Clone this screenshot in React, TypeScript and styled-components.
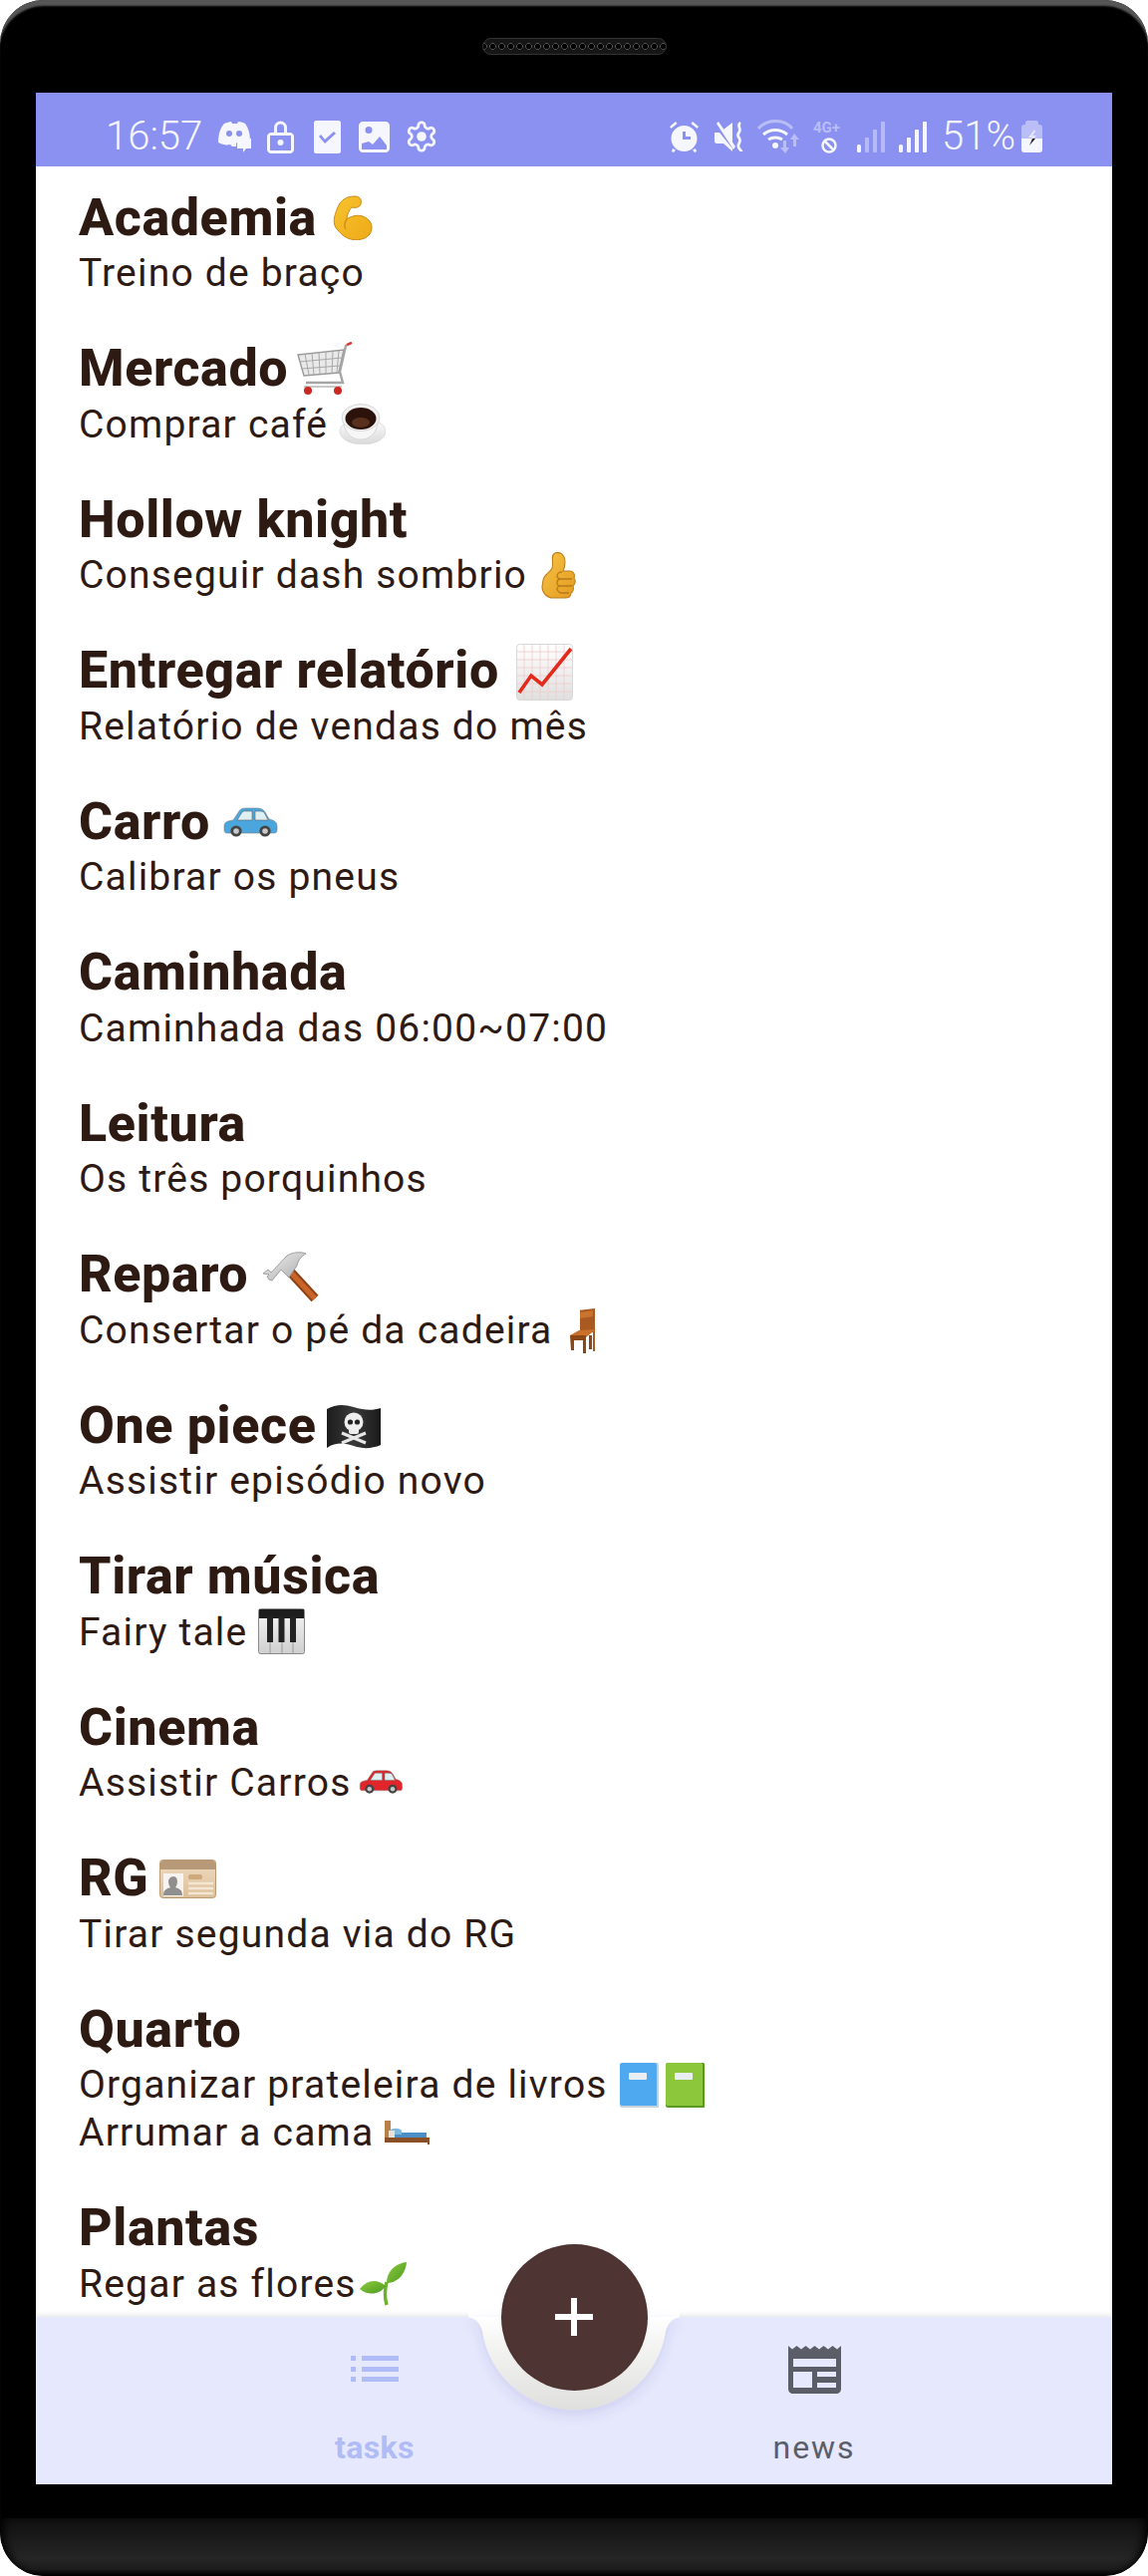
import React from 'react';
import styled, { createGlobalStyle } from 'styled-components';

const Global = createGlobalStyle`
  html, body { margin: 0; padding: 0; background: #fff; }
  * { box-sizing: border-box; }
`;

const Phone = styled.div`
  position: relative;
  width: 1152px;
  height: 2585px;
  display: flex;
  flex-direction: column;
  background: #000;
  border-radius: 44px;
  overflow: hidden;
  box-shadow: inset 0 7px 2px -1px #565656;
`;
const Speaker = styled.div`
  align-self: center;
  width: 185px;
  height: 17px;
  margin-top: 38px;
  border-radius: 9px;
  border: 1px solid #333;
  background-color: #161616;
  background-image: radial-gradient(circle at center, #000 2.4px, #5a5a5a 3px, transparent 3.6px);
  background-size: 9px 15px;
  background-position: 5px 0;
  background-repeat: repeat-x;
`;
const Screen = styled.div`
  margin: 38px 36px 0;
  height: 2400px;
  display: flex;
  flex-direction: column;
  background: #fff;
`;
const Chin = styled.div`
  margin-top: 34px;
  height: 58px;
  background: linear-gradient(#0f0f0f, #262626 70%, #1c1c1c 88%, #000);
  border-radius: 0 0 44px 44px;
  box-shadow: inset 10px 0 10px -6px #000, inset -10px 0 10px -6px #000;
`;
const StatusBar = styled.div`
  height: 74px;
  flex: none;
  background: #8a91f1;
  display: flex;
  align-items: center;
  justify-content: space-between;
  padding: 14px 70px 0 70px;
  color: #f5f6fe;
`;
const StatusGroup = styled.div`
  display: flex;
  align-items: center;
`;
const StatusText = styled.span<{ $ml?: number }>`
  font-family: Roboto, 'Liberation Sans', sans-serif;
  font-weight: 300;
  font-size: 40px;
  line-height: 44px;
  margin-left: ${p => p.$ml ?? 0}px;
`;
const StatusIcon = styled.svg<{ $ml: number; $dim?: boolean }>`
  display: block;
  flex: none;
  margin-left: ${p => p.$ml}px;
  fill: #f5f6fe;
  stroke: none;
  opacity: ${p => (p.$dim ? 0.45 : 1)};
`;
const List = styled.div`
  flex: 1;
  min-height: 0;
  overflow: hidden;
  padding: 20.5px 0 0 43px;
  color: #2d1a13;
`;
const Item = styled.div`
  margin-bottom: 41px;
`;
const Title = styled.div`
  font-family: Roboto, 'Liberation Sans', sans-serif;
  font-weight: 800;
  font-size: 52px;
  line-height: 62.5px;
  letter-spacing: 0.6px;
  white-space: nowrap;
`;
const Sub = styled.div`
  font-family: Roboto, 'Liberation Sans', sans-serif;
  font-weight: 400;
  font-size: 39px;
  line-height: 48px;
  letter-spacing: 1.2px;
  white-space: nowrap;
`;
const Emoji = styled.svg<{ $drop: number; $gap?: number }>`
  display: inline-block;
  vertical-align: ${p => -p.$drop}px;
  margin-top: -40px;
  margin-left: ${p => p.$gap ?? 0}px;
`;
const TabBar = styled.div`
  position: relative;
  flex: none;
  height: 168px;
  display: flex;
  padding-left: 240px;
  gap: 241px;
  background: #e6e8fd;
  box-shadow: 0 -1px 6px rgba(0, 0, 0, 0.13);
`;
const Tab = styled.div<{ $active?: boolean }>`
  width: 200px;
  height: 100%;
  display: flex;
  flex-direction: column;
  align-items: center;
  font-family: Roboto, 'Liberation Sans', sans-serif;
  color: ${p => (p.$active ? '#b0bcf5' : '#5b5e66')};
  fill: ${p => (p.$active ? '#b0bcf5' : '#5b5e66')};
`;
const TabIconSlot = styled.div<{ $top: number }>`
  height: 84px;
  margin-top: ${p => p.$top}px;
  display: flex;
  align-items: flex-start;
  justify-content: center;
`;
const TabLabel = styled.span<{ $active?: boolean; $shift: number }>`
  font-size: 32px;
  line-height: 36px;
  margin-top: ${p => p.$shift}px;
  font-weight: ${p => (p.$active ? 700 : 400)};
  letter-spacing: ${p => (p.$active ? 0.4 : 1.9)}px;
`;
const Notch = styled.svg`
  position: absolute;
  left: 404px;
  top: -8px;
  overflow: hidden;
`;
const Fab = styled.button`
  position: absolute;
  left: 466.5px;
  top: -73.5px;
  width: 147px;
  height: 147px;
  border: 0;
  padding: 0;
  border-radius: 50%;
  background: #4e3534;
  display: flex;
  align-items: center;
  justify-content: center;
`;

/* ---------- Emoji drawings ---------- */
type EP = { drop: number; gap?: number };
const Muscle = ({ drop, gap }: EP) => (
  <Emoji $drop={drop} $gap={gap} width="42" height="45" viewBox="0 0 42 45">
    <defs><linearGradient id="mu" x1="0" y1="0" x2="1" y2="1"><stop offset="0" stopColor="#f7c32e" /><stop offset="1" stopColor="#eeaa17" /></linearGradient></defs>
    <path d="M7 35C1 29 3 21 7 12 10 5 15 1 24 1c6 0 7 4 6 8-1 3-5 4-9 3-3 3-5 8-5 12 5-4 13-5 18-2 7 3 9 11 5 17-5 7-18 7-24 3-4-2-6-5-8-7Z" fill="url(#mu)" stroke="#c98a1c" strokeWidth="1" />
    <path d="M16 24c-2 3-3 7-1 10" fill="none" stroke="#d08f1a" strokeWidth="1.5" />
  </Emoji>
);
const Cart = ({ drop, gap }: EP) => (
  <Emoji $drop={drop} $gap={gap} width="58" height="54" viewBox="0 0 58 54">
    <path d="M2 13 48 8 43 31 8 34Z" fill="#e9e9e9" stroke="#9a9a9a" strokeWidth="1.4" />
    <path d="M9 12 13 33M16 11 18 33M23 10 24 32M30 10 30 32M37 9 36 32M43 9 41 31M4 20 46 16M6 27 44 24" stroke="#a8a8a8" strokeWidth="1" fill="none" />
    <path d="M55 1 50 4 44 30 47 41H10" stroke="#a5a5a5" strokeWidth="2.4" fill="none" />
    <path d="M56 1 51 3" stroke="#e0342c" strokeWidth="2.4" />
    <path d="M8 45H46" stroke="#c9c9c9" strokeWidth="2" />
    <circle cx="12" cy="49" r="4" fill="#c92a24" /><circle cx="42" cy="49" r="4" fill="#c92a24" />
  </Emoji>
);
const Coffee = ({ drop, gap }: EP) => (
  <Emoji $drop={drop} $gap={gap} width="47" height="41" viewBox="0 0 47 41">
    <defs><linearGradient id="co" x1="0" y1="0" x2="0" y2="1"><stop offset="0" stopColor="#fff" /><stop offset="1" stopColor="#d9d9d9" /></linearGradient></defs>
    <ellipse cx="24" cy="28" rx="23" ry="13" fill="url(#co)" stroke="#dcdcdc" />
    <path d="M4 14C5 30 13 36 22 36s17-6 18-22Z" fill="#f6f6f6" stroke="#d8d8d8" />
    <ellipse cx="22" cy="14" rx="19" ry="13.5" fill="#f2f2f2" stroke="#d8d8d8" />
    <ellipse cx="22" cy="15" rx="15.5" ry="11" fill="#2b130b" />
    <ellipse cx="22" cy="19" rx="9" ry="5" fill="#59301d" />
  </Emoji>
);
const Thumb = ({ drop, gap }: EP) => (
  <Emoji $drop={drop} $gap={gap} width="35" height="47" viewBox="0 0 35 47">
    <defs><linearGradient id="th" x1="0" y1="0" x2="1" y2="1"><stop offset="0" stopColor="#f6c445" /><stop offset="1" stopColor="#e49a20" /></linearGradient></defs>
    <path d="M2 28C3 22 9 21 11 16 13 10 9 3 14 1c5-2 10 2 10 9 0 4-1 7-2 9h7c4 0 5 4 4 7 2 3 1 6-1 8 1 3 0 6-2 7 0 4-3 5-6 5H12C6 46 1 41 1 35Z" fill="url(#th)" stroke="#bf7f1c" strokeWidth="1.1" />
    <path d="M21 20c-3 0-5 2-5 4s2 3 5 3h10M20 27c-3 0-4 2-4 4s2 3 4 3h11M20 34c-3 0-4 2-4 3s2 4 4 4h8" fill="none" stroke="#b87918" strokeWidth="1.3" />
  </Emoji>
);
const Chart = ({ drop, gap }: EP) => (
  <Emoji $drop={drop} $gap={gap} width="57" height="57" viewBox="0 0 57 57">
    <defs><linearGradient id="ch" x1="0" y1="0" x2="0" y2="1"><stop offset="0" stopColor="#fff" /><stop offset="1" stopColor="#dfdfdf" /></linearGradient></defs>
    <rect x=".5" y=".5" width="56" height="56" rx="3" fill="url(#ch)" stroke="#d8d8d8" />
    <path d="M8 1V56M16 1V56M24 1V56M32 1V56M40 1V56M48 1V56M1 8H56M1 16H56M1 24H56M1 32H56M1 40H56M1 48H56" stroke="#f3c9c9" strokeWidth=".8" />
    <path d="M3 49 15 32 26 41 55 5" fill="none" stroke="#e22b1c" strokeWidth="3.6" />
  </Emoji>
);
const Car = ({ drop, gap, color, w, h }: EP & { color: string; w: number; h: number }) => (
  <Emoji $drop={drop} $gap={gap} width={w} height={h} viewBox="0 0 56 30">
    <path d="M2 19c0-4 3-5 9-6l6-9c1-2 3-3 6-3h12c4 0 6 1 8 4l4 7c5 1 8 3 8 7v4c0 2-1 3-3 3H5c-2 0-3-1-3-3Z" fill={color} stroke="#7d7d7d" strokeWidth=".6" />
    <path d="M15 13 20 5c1-1 2-1 3-1h7v9ZM33 4h5c3 0 4 1 5 3l3 6H33Z" fill="#dff0f5" stroke="#666" strokeWidth=".6" />
    <circle cx="14" cy="24" r="5.6" fill="#444" /><circle cx="14" cy="24" r="2.8" fill="#c9c9c9" />
    <circle cx="43" cy="24" r="5.6" fill="#444" /><circle cx="43" cy="24" r="2.8" fill="#c9c9c9" />
  </Emoji>
);
const Hammer = ({ drop, gap }: EP) => (
  <Emoji $drop={drop} $gap={gap} width="57" height="50" viewBox="0 0 57 50">
    <defs><linearGradient id="ha" x1="0" y1="0" x2="1" y2="1"><stop offset="0" stopColor="#f2f2f2" /><stop offset="1" stopColor="#a9a9a9" /></linearGradient></defs>
    <path d="M29 21 53 47" stroke="#8f4315" strokeWidth="9.5" />
    <path d="M29 21 53 47" stroke="#c9642a" strokeWidth="5.5" />
    <path d="M1 22 6 18 9 21 25 4c7-4 14-4 19-2-5 3-8 7-9 12l-8 12-8-8-9 11-3-1-2-3 2-2Z" fill="url(#ha)" stroke="#8e8e8e" strokeWidth=".8" />
  </Emoji>
);
const Chair = ({ drop, gap }: EP) => (
  <Emoji $drop={drop} $gap={gap} width="28" height="46" viewBox="0 0 28 46">
    <path d="M9 3 26 1V44H24V25L11 26V3Z" fill="#a95a20" />
    <path d="M11 5 24 3V9L11 11Z" fill="#c9742e" />
    <path d="M1 28 10 23 27 22 17 30Z" fill="#c9702b" />
    <path d="M1 28H17V46H14V33H5V43H2ZM20 28H23V42H20Z" fill="#8c4717" />
  </Emoji>
);
const Flag = ({ drop, gap }: EP) => (
  <Emoji $drop={drop} $gap={gap} width="56" height="46" viewBox="0 0 56 46">
    <defs><linearGradient id="fl" x1="0" y1="0" x2="1" y2="0"><stop offset="0" stopColor="#1c1c1c" /><stop offset=".5" stopColor="#3a3a3a" /><stop offset="1" stopColor="#1a1a1a" /></linearGradient></defs>
    <path d="M1 5C10 0 18 0 28 3s18 4 27 1V41c-9 4-18 4-27 1S10 38 1 44Z" fill="url(#fl)" />
    <path d="M16 29 40 39M40 29 16 39" stroke="#e8e8e8" strokeWidth="3" />
    <circle cx="28" cy="18" r="9.5" fill="#eee" /><rect x="23" y="24" width="10" height="6" rx="2" fill="#eee" />
    <circle cx="24.5" cy="18" r="2.6" fill="#222" /><circle cx="31.5" cy="18" r="2.6" fill="#222" />
  </Emoji>
);
const Piano = ({ drop, gap }: EP) => (
  <Emoji $drop={drop} $gap={gap} width="47" height="46" viewBox="0 0 47 46">
    <defs><linearGradient id="pi" x1="0" y1="0" x2="0" y2="1"><stop offset="0" stopColor="#f5f5f5" /><stop offset="1" stopColor="#cfcfcf" /></linearGradient></defs>
    <rect x=".5" y=".5" width="46" height="45" rx="2" fill="url(#pi)" stroke="#8a8a8a" />
    <rect x="1" y="1" width="45" height="9" fill="#1d1d1d" />
    <path d="M12 10V45M24 10V45M35 10V45" stroke="#9a9a9a" />
    <path d="M9 8h6v26H9ZM20.500 8h6v26h-6ZM32 8h6v26h-6Z" fill="#222" />
  </Emoji>
);
const IdCard = ({ drop, gap }: EP) => (
  <Emoji $drop={drop} $gap={gap} width="57" height="39" viewBox="0 0 57 39">
    <defs><linearGradient id="id" x1="0" y1="0" x2="0" y2="1"><stop offset="0" stopColor="#efdcc2" /><stop offset="1" stopColor="#dcbf9a" /></linearGradient></defs>
    <rect x=".5" y=".5" width="56" height="38" rx="3" fill="url(#id)" stroke="#b89a74" />
    <path d="M1 4c0-2 1-3 3-3h49c2 0 3 1 3 3v6H1Z" fill="#b89a78" />
    <rect x="4" y="14" width="20" height="23" fill="#f7f3ee" />
    <path d="M14 17c3 0 4 3 4 5s-1 5-2 6c3 1 7 2 7 8H4c0-6 4-7 7-8-1-1-2-4-2-6s2-5 5-5Z" fill="#8f8f8f" />
    <rect x="29" y="15" width="14" height="5" rx="2" fill="#cfa87b" />
    <path d="M29 24H54M29 29H54M29 34H54" stroke="#f3e6d2" strokeWidth="2.4" />
  </Emoji>
);
const Book = ({ drop, gap, color, edge }: EP & { color: string; edge: string }) => (
  <Emoji $drop={drop} $gap={gap} width="41" height="45" viewBox="0 0 41 45">
    <path d="M1 2c0-1 1-2 2-2h36l1 1v44H3c-1 0-2-1-2-2Z" fill={edge} />
    <path d="M1 2c0-1 1-2 2-2h33c1 0 2 1 2 2v41H3c-1 0-2-1-2-2Z" fill={color} />
    <rect x="10" y="10" width="18" height="7" rx="1" fill="#e9eef2" />
  </Emoji>
);
const Bed = ({ drop, gap }: EP) => (
  <Emoji $drop={drop} $gap={gap} width="45" height="24" viewBox="0 0 45 24">
    <rect x="0" y="0" width="6" height="22" fill="#b98149" />
    <rect x="4" y="12" width="38" height="6" fill="#4c8fc7" />
    <path d="M5 10c3-3 9-3 12 0v4H5Z" fill="#7fb9dd" />
    <rect x="4" y="10" width="6" height="7" fill="#e9e2d2" />
    <rect x="0" y="17" width="45" height="5" fill="#8b4f26" />
    <rect x="43" y="17" width="2" height="7" fill="#8b4f26" />
  </Emoji>
);
const Seedling = ({ drop, gap }: EP) => (
  <Emoji $drop={drop} $gap={gap} width="47" height="44" viewBox="0 0 47 44">
    <defs><linearGradient id="se" x1="0" y1="0" x2="1" y2="1"><stop offset="0" stopColor="#8ecb3f" /><stop offset="1" stopColor="#4b9a1f" /></linearGradient></defs>
    <path d="M27 20C25 28 25 36 27 43" fill="none" stroke="#6db02c" strokeWidth="3.4" />
    <path d="M27 21C27 8 37 1 47 0 46 12 38 21 27 21Z" fill="url(#se)" />
    <path d="M26 24C17 16 7 18 0 27 8 34 20 33 26 24Z" fill="url(#se)" />
  </Emoji>
);

/* ---------- Data ---------- */
type Line = { text: string; emoji?: React.ReactNode };
type Task = { title: string; emoji?: React.ReactNode; lines: Line[] };
const tasks: Task[] = [
  { title: 'Academia', emoji: <Muscle drop={5} gap={1} />, lines: [{ text: 'Treino de braço' }] },
  { title: 'Mercado', emoji: <Cart drop={10} gap={-6} />, lines: [{ text: 'Comprar café', emoji: <Coffee drop={7} /> }] },
  { title: 'Hollow knight', lines: [{ text: 'Conseguir dash sombrio', emoji: <Thumb drop={11} gap={3} /> }] },
  { title: 'Entregar relatório', emoji: <Chart drop={13} gap={4} />, lines: [{ text: 'Relatório de vendas do mês' }] },
  { title: 'Carro', emoji: <Car drop={1} gap={-2} color="#4aa6dc" w={56} h={36} />, lines: [{ text: 'Calibrar os pneus' }] },
  { title: 'Caminhada', lines: [{ text: 'Caminhada das 06:00~07:00' }] },
  { title: 'Leitura', lines: [{ text: 'Os três porquinhos' }] },
  { title: 'Reparo', emoji: <Hammer drop={10} />, lines: [{ text: 'Consertar o pé da cadeira', emoji: <Chair drop={10} gap={6} /> }] },
  { title: 'One piece', emoji: <Flag drop={7} gap={-4} />, lines: [{ text: 'Assistir episódio novo' }] },
  { title: 'Tirar música', lines: [{ text: 'Fairy tale', emoji: <Piano drop={9} /> }] },
  { title: 'Cinema', lines: [{ text: 'Assistir Carros', emoji: <Car drop={-2} gap={-4} color="#e0262a" w={46} h={24} /> }] },
  { title: 'RG', emoji: <IdCard drop={3} gap={-3} />, lines: [{ text: 'Tirar segunda via do RG' }] },
  {
    title: 'Quarto',
    lines: [
      {
        text: 'Organizar prateleira de livros',
        emoji: (
          <>
            <Book drop={10} color="#4fa9f1" edge="#c5d3de" />
            <Book drop={10} gap={5} color="#8cc63a" edge="#5a9a22" />
          </>
        ),
      },
      { text: 'Arrumar a cama', emoji: <Bed drop={-1} /> },
    ],
  },
  { title: 'Plantas', lines: [{ text: 'Regar as flores', emoji: <Seedling drop={9} gap={-8} /> }] },
];

export default function App() {
  return (
    <>
      <Global />
      <Phone>
        <Speaker />
        <Screen>
          <StatusBar>
            <StatusGroup>
              <StatusText>16:57</StatusText>
              {/* Discord with chat bubble */}
              <StatusIcon $ml={15} width="34" height="32" viewBox="0 0 34 32">
                <path d="M7 3c3-1 5-2 7-2l1 2h5l1-2c3 0 5 1 7 2 3 4 5 10 5 17h-9c-2 0-4 1-5 3v3h-4l-2-2c-4 1-8 0-12-2 0-8 2-15 6-19Z" />
                <circle cx="12" cy="13" r="3" fill="#8a91f1" /><circle cx="22" cy="13" r="3" fill="#8a91f1" />
                <path d="M20 18h14v10h-5l-3 4v-4h-6Z" />
              </StatusIcon>
              <StatusIcon $ml={16} width="27" height="34" viewBox="0 0 27 34">
                <path fillRule="evenodd" d="M7 13V8a6.500 6.500 0 0 1 13 0v5h3c2 0 4 2 4 4v13c0 2-2 4-4 4H4c-2 0-4-2-4-4V17c0-2 2-4 4-4Zm3 0h7V8a3.500 3.500 0 0 0-7 0ZM4 16c-1 0-1 0-1 1v13c0 1 0 1 1 1h19c1 0 1 0 1-1V17c0-1 0-1-1-1Z" />
                <circle cx="13.500" cy="23" r="3" />
              </StatusIcon>
              <StatusIcon $ml={20} width="27" height="33" viewBox="0 0 27 33">
                <path fillRule="evenodd" d="M2 0h23c1 0 2 1 2 2v29c0 1-1 2-2 2H2c-1 0-2-1-2-2V2C0 1 1 0 2 0Zm5 14-2 2 6 7 11-10-2-2-9 8Z" />
              </StatusIcon>
              <StatusIcon $ml={18} width="31" height="31" viewBox="0 0 31 31">
                <path fillRule="evenodd" d="M4 0h23c2 0 4 2 4 4v23c0 2-2 4-4 4H4c-2 0-4-2-4-4V4c0-2 2-4 4-4Zm6 5a3.500 3.500 0 1 0 0 7 3.500 3.500 0 0 0 0-7ZM3 22v5c0 1 0 1 1 1h23c1 0 1 0 1-1v-3l-7-9-7 8-4-3Z" />
              </StatusIcon>
              <StatusIcon $ml={15} width="34" height="34" viewBox="0 0 24 24">
                <path fill="none" stroke="#f5f6fe" strokeWidth="2" d="M12.220 2h-.44a2 2 0 0 0-2 2v.18a2 2 0 0 1-1 1.730l-.43.25a2 2 0 0 1-2 0l-.15-.08a2 2 0 0 0-2.730.73l-.22.380a2 2 0 0 0 .73 2.730l.15.1a2 2 0 0 1 1 1.720v.51a2 2 0 0 1-1 1.740l-.15.090a2 2 0 0 0-.73 2.730l.22.380a2 2 0 0 0 2.730.730l.15-.08a2 2 0 0 1 2 0l.43.250a2 2 0 0 1 1 1.730V20a2 2 0 0 0 2 2h.44a2 2 0 0 0 2-2v-.18a2 2 0 0 1 1-1.730l.43-.25a2 2 0 0 1 2 0l.15.080a2 2 0 0 0 2.730-.730l.22-.39a2 2 0 0 0-.73-2.730l-.15-.08a2 2 0 0 1-1-1.740v-.5a2 2 0 0 1 1-1.740l.15-.09a2 2 0 0 0 .73-2.730l-.22-.380a2 2 0 0 0-2.730-.730l-.15.080a2 2 0 0 1-2 0l-.43-.25a2 2 0 0 1-1-1.730V4a2 2 0 0 0-2-2z" />
                <circle cx="12" cy="12" r="3.400" />
              </StatusIcon>
            </StatusGroup>
            <StatusGroup>
              {/* alarm */}
              <StatusIcon $ml={0} width="29" height="31" viewBox="0 0 29 31">
                <path fillRule="evenodd" d="M14.500 4a13 13 0 1 1 0 26 13 13 0 0 1 0-26Zm-1.500 6v8h8v-3h-5v-5Z" />
                <path d="M0 5 6 0l1.500 2-6 5ZM29 5 23 0l-1.500 2 6 5ZM3 27l3 1.500-2 2.500-2-1ZM26 27l-3 1.500 2 2.500 2-1Z" />
              </StatusIcon>
              {/* mute/vibrate */}
              <StatusIcon $ml={16} width="29" height="31" viewBox="0 0 29 31">
                <path d="M2 2 4 0 21 25l-2 3ZM0 11h5l13 16v3l-9-8H2c-1 0-2-1-2-2ZM9 8l9-7v21Z" />
                <path d="M26 1c-4 3 1 6-1 9-2 3-2 4 0 7 2 4-2 5-1 8 0 2 3 4 3 5" fill="none" stroke="#f5f6fe" strokeWidth="2.800" />
              </StatusIcon>
              {/* wifi */}
              <StatusIcon $ml={14} width="42" height="34" viewBox="0 0 42 34">
                <path d="M1 9C10-1 27-1 35 9" fill="none" stroke="#fff" strokeOpacity=".4" strokeWidth="3" />
                <path d="M6 15c7-6 17-6 24 0M11 20c5-3 9-3 14 0" fill="none" stroke="#f5f6fe" strokeWidth="3" />
                <circle cx="18" cy="26" r="3" />
                <path d="M28 34l-5-6h3v-7h3v7h3ZM37 14l5 6h-3v7h-3v-7h-3Z" opacity=".45" />
              </StatusIcon>
              {/* 4G+ */}
              <StatusIcon $ml={14} width="32" height="34" viewBox="0 0 32 34">
                <circle cx="16" cy="26" r="6.500" fill="none" stroke="#f5f6fe" strokeWidth="2.500" />
                <path d="M11 21 21 31" stroke="#f5f6fe" strokeWidth="2.500" />
                <text x="0" y="13" fontFamily="Roboto, sans-serif" fontWeight="700" fontSize="15" fill="#f5f6fe" fillOpacity=".45">4G+</text>
              </StatusIcon>
              {/* signal dim */}
              <StatusIcon $ml={12} width="28" height="31" viewBox="0 0 28 31">
                <rect x="0" y="23" width="4" height="8" rx="1.500" />
                <g opacity=".4">
                  <rect x="8" y="16" width="4" height="15" rx="1" /><rect x="16" y="8" width="4" height="23" rx="1" /><rect x="24" y="0" width="4" height="31" rx="1" />
                </g>
              </StatusIcon>
              {/* signal */}
              <StatusIcon $ml={14} width="28" height="31" viewBox="0 0 28 31">
                <rect x="0" y="23" width="4" height="8" rx="1.500" /><rect x="8" y="16" width="4" height="15" rx="1" /><rect x="16" y="8" width="4" height="23" rx="1" /><rect x="24" y="0" width="4" height="31" rx="1" />
              </StatusIcon>
              <StatusText $ml={15}>51%</StatusText>
              {/* battery */}
              <StatusIcon $ml={6} width="21" height="32" viewBox="0 0 21 32">
                <path d="M6 0h9c1 0 2 1 2 2v2h1c2 0 3 1 3 3v11H0V7c0-2 1-3 3-3h1V2c0-1 1-2 2-2Z" opacity=".45" />
                <path d="M0 18h21v11c0 2-1 3-3 3H3c-2 0-3-1-3-3Z" />
                <path d="M13 9 7 17h4l-3 5 7-7h-4l3-4Z" fill="#f5f6fe" fillOpacity=".7" />
                <path d="M11 18h3l-6 7Z" fill="#222" />
              </StatusIcon>
            </StatusGroup>
          </StatusBar>
          <List>
            {tasks.map(t => (
              <Item key={t.title}>
                <Title>
                  {t.title} {t.emoji}
                </Title>
                {t.lines.map(l => (
                  <Sub key={l.text}>
                    {l.text} {l.emoji}
                  </Sub>
                ))}
              </Item>
            ))}
          </List>
          <TabBar>
            <Tab $active>
              <TabIconSlot $top={39}>
                <svg width="48" height="27" viewBox="0 0 48 27">
                  <path d="M0 0h5v5H0ZM11 0h37v5H11ZM0 11h5v5H0ZM11 11h37v5H11ZM0 21h5v5H0ZM11 21h37v5H11Z" />
                </svg>
              </TabIconSlot>
              <TabLabel $active $shift={-10}>tasks</TabLabel>
            </Tab>
            <Tab>
              <TabIconSlot $top={29}>
                <svg width="53" height="48" viewBox="0 0 53 48">
                  <path fillRule="evenodd" d="M0 0l4 3.500L8.500 0l4.500 3.500L17.500 0 22 3.500 26.500 0 31 3.500 35.500 0 40 3.500 44.500 0 49 3.500 53 0v43c0 3-2 5-5 5H5c-3 0-5-2-5-5ZM5 13v8h43v-8ZM5 26v16h19V26Zm24 0v5h19v-5Zm0 11v5h19v-5Z" />
                </svg>
              </TabIconSlot>
              <TabLabel $shift={0}>news</TabLabel>
            </Tab>
            <Notch width="272" height="150" viewBox="0 -8 272 150">
              <defs>
                <linearGradient id="ring" x1="0" y1="0" x2="0" y2="1">
                  <stop offset="0" stopColor="#ffffff" />
                  <stop offset=".3" stopColor="#f4f4f3" />
                  <stop offset="1" stopColor="#dfdfdd" />
                </linearGradient>
                <filter id="ringShadow" x="-10%" y="-10%" width="120%" height="140%">
                  <feDropShadow dx="0" dy="5" stdDeviation="6" floodColor="#3c46a0" floodOpacity=".14" />
                </filter>
              </defs>
              <rect x="30" y="-8" width="212" height="8" fill="#fff" />
              <path d="M27 0Q40 0 44 14A93 93 0 0 0 228 14Q232 0 245 0Z" fill="url(#ring)" filter="url(#ringShadow)" />
            </Notch>
            <Fab aria-label="add">
              <svg width="38" height="38" viewBox="0 0 38 38">
                <path d="M16 0h6v16h16v6H22v16h-6V22H0v-6h16Z" fill="#fff" />
              </svg>
            </Fab>
          </TabBar>
        </Screen>
        <Chin />
      </Phone>
    </>
  );
}
